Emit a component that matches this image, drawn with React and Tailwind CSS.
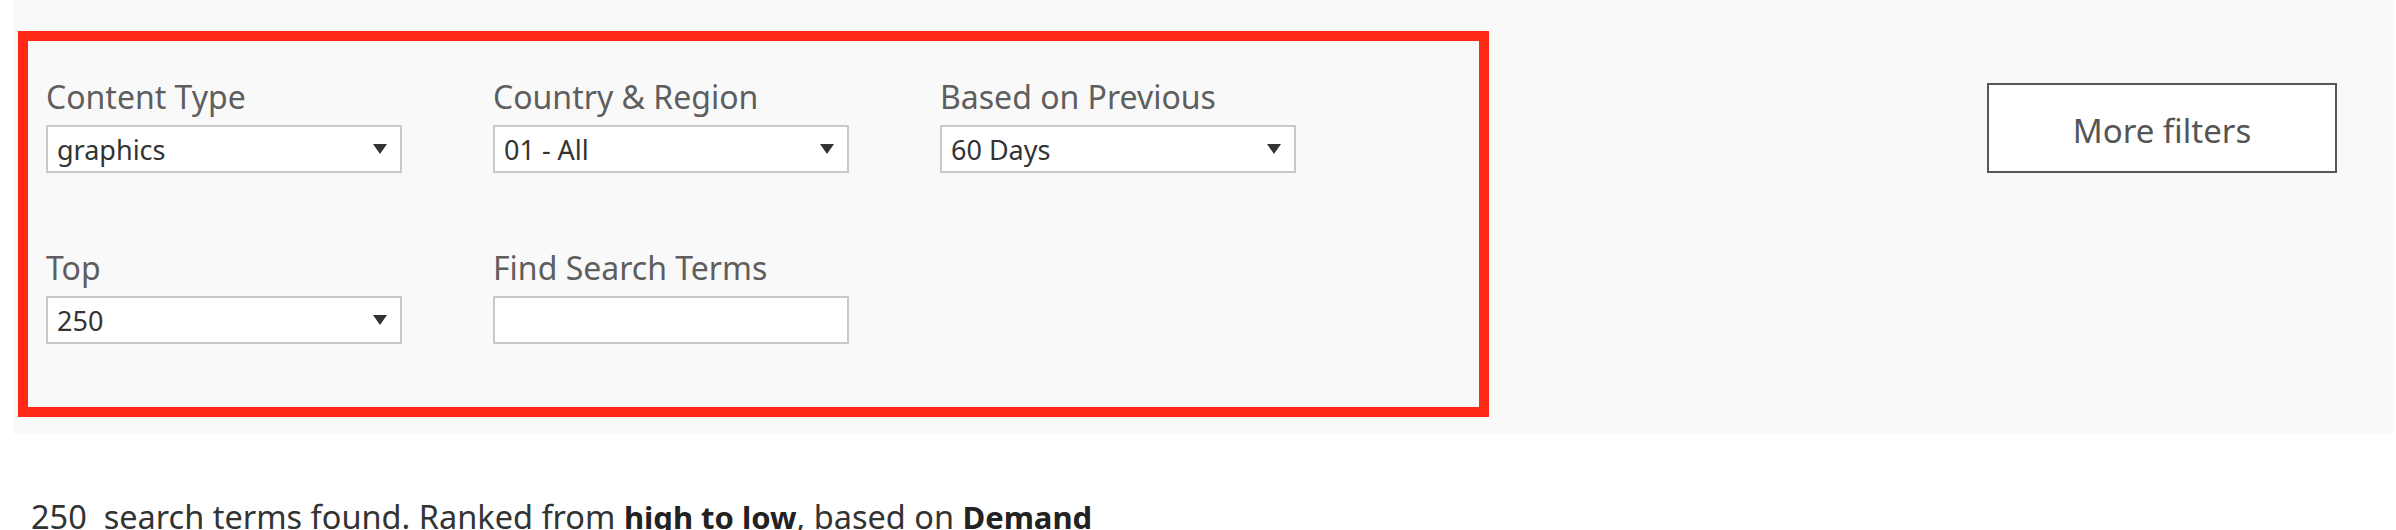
import React from "react";

const font = { fontFamily: '"Noto Sans", "Open Sans", sans-serif' };

function Arrow() {
  return (
    <svg width="14" height="10" viewBox="0 0 14 10" className="shrink-0">
      <polygon points="0,0 14,0 7,10" fill="#333333" />
    </svg>
  );
}

function Label({ children }) {
  return (
    <div className="text-[32px] leading-none text-[#5e5e5e] mb-[12px] whitespace-nowrap">
      {children}
    </div>
  );
}

function SelectBox({ value }) {
  return (
    <div className="w-[356px] h-[48px] bg-white border-2 border-[#c9c9c9] flex items-center justify-between pl-[9px] pr-[13px]">
      <span className="text-[27px] leading-none text-[#333333]">{value}</span>
      <Arrow />
    </div>
  );
}

function Field({ label, value, input }) {
  return (
    <div className="flex flex-col">
      <Label>{label}</Label>
      {input ? (
        <div className="w-[356px] h-[48px] bg-white border-2 border-[#c9c9c9]" />
      ) : (
        <SelectBox value={value} />
      )}
    </div>
  );
}

export default function App() {
  return (
    <div className="w-full h-[530px] bg-white overflow-hidden" style={font}>
      <div className="ml-[13px] mr-[2px] h-[434px] bg-[#f9f9f9] flex items-start">
        <div className="mt-[31px] ml-[5px] w-[1471px] h-[386px] border-[10px] border-[#fe2a16] pl-[18px] pt-[40px]">
          <div className="grid grid-cols-[356px_356px_356px] gap-x-[91px] gap-y-[79px]">
            <Field label="Content Type" value="graphics" />
            <Field label="Country & Region" value="01 - All" />
            <Field label="Based on Previous" value="60 Days" />
            <Field label="Top" value="250" />
            <Field label="Find Search Terms" input />
          </div>
        </div>
        <button className="mt-[83px] ml-[498px] w-[350px] h-[90px] bg-white border-2 border-[#585858] flex items-center justify-center pt-[5px] text-[33px] leading-none text-[#555555]">
          More filters
        </button>
      </div>
      <div className="mt-[67px] ml-[31px] text-[32.5px] leading-none text-[#333333] whitespace-pre">
        {"250  search terms found. Ranked from "}
        <span className="font-bold text-[31px] text-[#222222]">high to low</span>
        {", based on "}
        <span className="font-bold text-[31px] text-[#222222]">Demand</span>
      </div>
    </div>
  );
}
